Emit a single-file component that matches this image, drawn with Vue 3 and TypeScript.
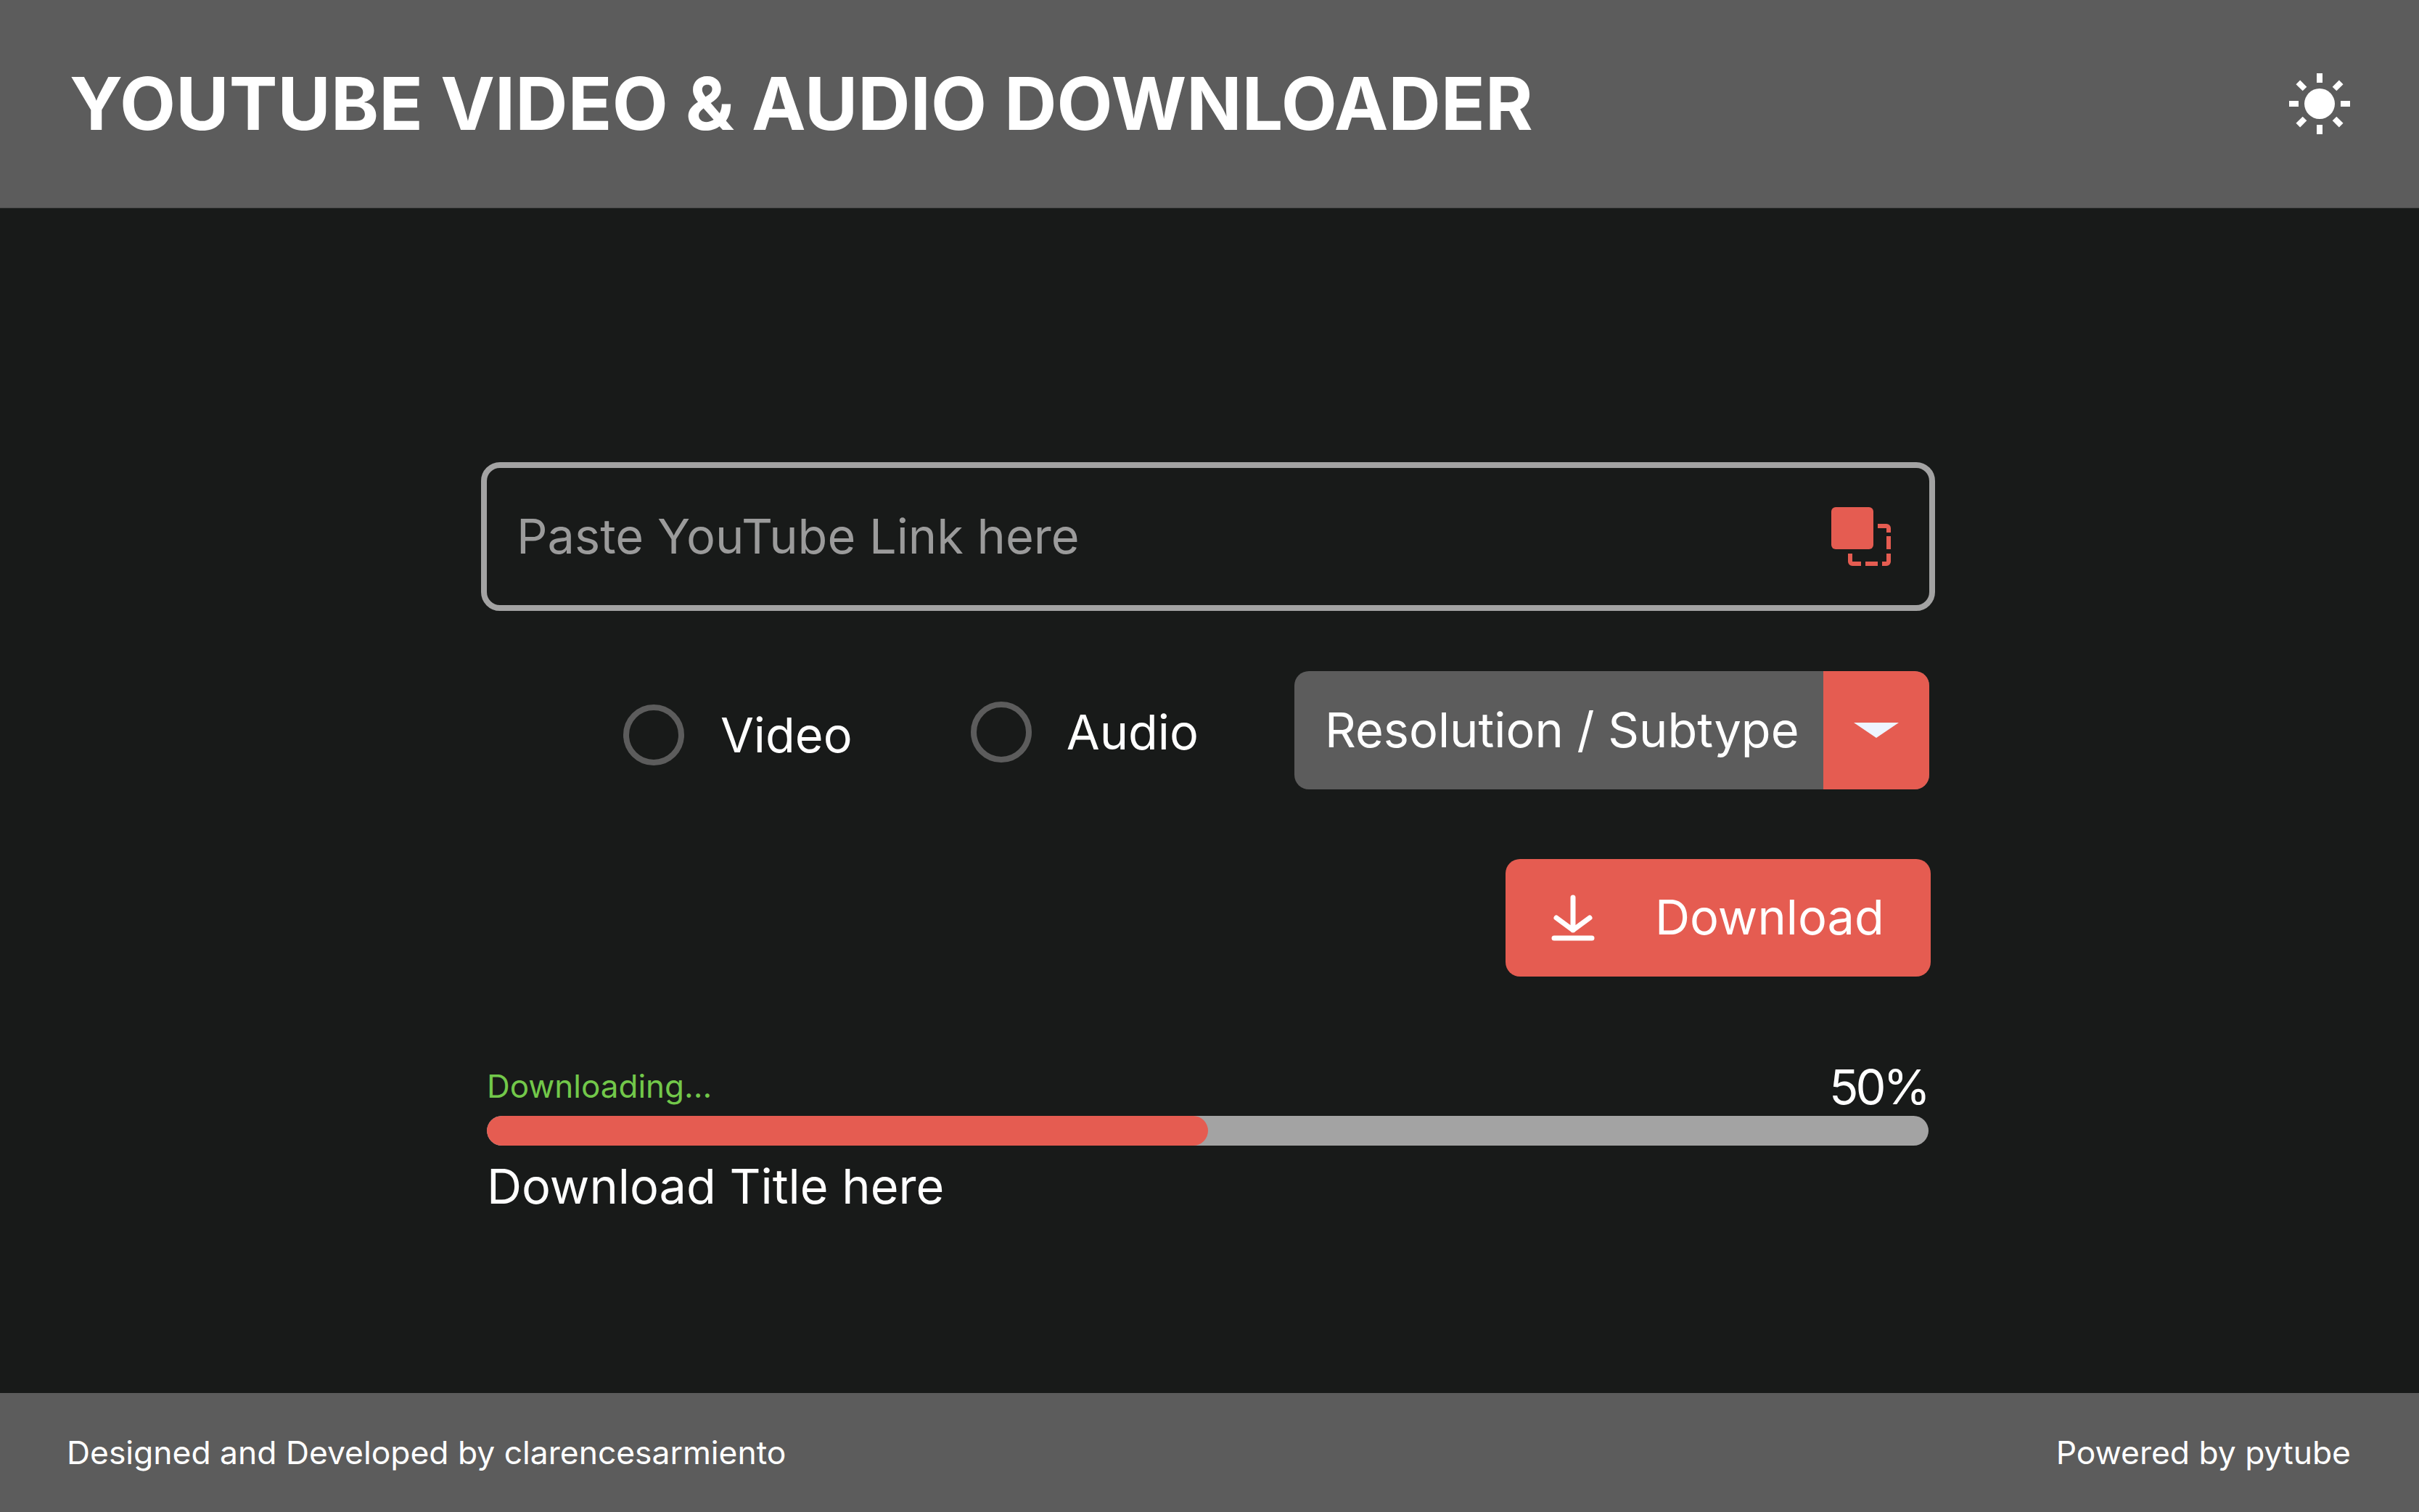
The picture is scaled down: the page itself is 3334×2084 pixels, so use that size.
<script setup lang="ts">
import { ref } from 'vue'

const progress = ref(50)
const link = ref('')
const mode = ref<'video' | 'audio' | null>(null)
const rays = [0, 45, 90, 135, 180, 225, 270, 315]
</script>

<template>
  <div class="app">
    <header class="topbar">
      <h1 class="title">YOUTUBE VIDEO &amp; AUDIO DOWNLOADER</h1>
      <button class="theme-btn" aria-label="Toggle theme">
        <svg width="84" height="84" viewBox="0 0 84 84">
          <circle cx="42" cy="42" r="21" fill="#fff" />
          <rect
            v-for="r in rays"
            :key="r"
            x="38"
            y="0"
            width="8"
            height="13"
            fill="#fff"
            :transform="`rotate(${r} 42 42)`"
          />
        </svg>
      </button>
    </header>

    <main class="content">
      <div class="link-box">
        <input v-model="link" class="link-input" placeholder="Paste YouTube Link here" />
        <svg class="paste-icon" width="82" height="81" viewBox="0 0 82 81" fill="none">
          <path
            d="M64 26H76a3 3 0 0 1 3 3V35M79 40V58M79 64V75a3 3 0 0 1-3 3H70M64 78H47M41 78H29a3 3 0 0 1-3-3V64"
            stroke="#e55c51"
            stroke-width="6"
          />
          <rect x="0" y="0" width="58" height="58" rx="6" fill="#e55c51" />
        </svg>
      </div>

      <div class="options">
        <label class="radio radio-video">
          <input v-model="mode" type="radio" value="video" />
          <span class="radio-dot"></span>
          <span>Video</span>
        </label>
        <label class="radio radio-audio">
          <input v-model="mode" type="radio" value="audio" />
          <span class="radio-dot"></span>
          <span>Audio</span>
        </label>
        <div class="select">
          <span class="select-label">Resolution / Subtype</span>
          <span class="select-arrow"><i></i></span>
        </div>
      </div>

      <div class="actions">
        <button class="download-btn">
          <svg width="60" height="64" viewBox="0 0 60 64" fill="none" stroke="#fff" stroke-width="7" stroke-linecap="round" stroke-linejoin="round">
            <path d="M30 4V49M7 32L30 49L53 32" />
            <path d="M4 60H56" />
          </svg>
          <span class="download-label">Download</span>
        </button>
      </div>

      <section class="progress">
        <div class="progress-head">
          <span class="status">Downloading...</span>
          <span class="percent">{{ progress }}%</span>
        </div>
        <div class="track">
          <div class="fill" :style="{ width: progress + '%' }"></div>
        </div>
        <div class="dl-title">Download Title here</div>
      </section>
    </main>

    <footer class="footer">
      <span>Designed and Developed by clarencesarmiento</span>
      <span>Powered by pytube</span>
    </footer>
  </div>
</template>

<style>
html,
body {
  margin: 0;
  background: #181a19;
}
</style>

<style scoped>
.app {
  min-height: 100vh;
  display: flex;
  flex-direction: column;
  background: #181a19;
  color: #fff;
  font-family: Inter, 'Noto Sans', sans-serif;
}

.topbar {
  height: 287px;
  box-sizing: border-box;
  display: flex;
  align-items: center;
  justify-content: space-between;
  padding: 0 90px 0 96px;
  background: #5c5c5c;
  border-bottom: 1px solid #4a4a4a;
}

.title {
  margin: 0;
  font-size: 100px;
  font-weight: 700;
  line-height: 1;
  letter-spacing: 0.2px;
  white-space: nowrap;
}

.theme-btn {
  display: flex;
  padding: 0;
  border: none;
  background: none;
  margin-right: 5px;
}

.content {
  flex: 1;
  box-sizing: border-box;
  padding: 350px 667px 0 663px;
}

.link-box {
  height: 205px;
  box-sizing: border-box;
  display: flex;
  align-items: center;
  border: 8px solid #a3a3a3;
  border-radius: 26px;
  padding: 0 53px 0 41px;
}

.link-input {
  flex: 1;
  min-width: 0;
  padding: 0 0 3px;
  border: none;
  outline: none;
  background: none;
  color: #fff;
  font-family: inherit;
  font-size: 66.67px;
}

.link-input::placeholder {
  color: #9b9b9b;
  opacity: 1;
}

.paste-icon {
  flex: none;
}

.options {
  height: 163px;
  display: flex;
  align-items: flex-start;
  justify-content: flex-end;
  margin-top: 83px;
  padding-right: 8px;
}

.radio {
  display: flex;
  align-items: center;
  gap: 50px;
  font-size: 66.67px;
  line-height: 84px;
}

.radio input {
  display: none;
}

.radio-dot {
  width: 84px;
  height: 84px;
  box-sizing: border-box;
  border: 8px solid #5c5c5c;
  border-radius: 50%;
}

.radio-video {
  margin: 46px 163px 0 0;
}

.radio-audio {
  gap: 48px;
  margin: 42px 132px 0 0;
}

.select {
  width: 875px;
  height: 163px;
  display: flex;
  border-radius: 20px;
  overflow: hidden;
  background: #5c5c5c;
}

.select-label {
  flex: 1;
  display: flex;
  align-items: center;
  padding: 0 0 3px 42px;
  font-size: 66.67px;
  white-space: nowrap;
}

.select-arrow {
  width: 146px;
  display: flex;
  align-items: center;
  justify-content: center;
  background: #e55c51;
}

.select-arrow i {
  width: 0;
  height: 0;
  border-left: 31px solid transparent;
  border-right: 31px solid transparent;
  border-top: 21px solid #eef4ff;
}

.actions {
  display: flex;
  justify-content: flex-end;
  margin-top: 96px;
  padding-right: 6px;
}

.download-btn {
  width: 586px;
  height: 162px;
  box-sizing: border-box;
  display: flex;
  align-items: center;
  gap: 83px;
  padding: 0 0 0 63px;
  border: none;
  border-radius: 20px;
  background: #e55c51;
  color: #fff;
  font-family: inherit;
  font-size: 66.67px;
}

.download-label {
  padding-bottom: 3px;
}

.progress {
  margin: 112px 6px 0 8px;
}

.progress-head {
  display: flex;
  justify-content: space-between;
  height: 80px;
}

.status {
  font-size: 44px;
  line-height: 54px;
  margin-top: 12px;
  color: #72c84a;
}

.percent {
  font-size: 66.67px;
  line-height: 80px;
  letter-spacing: -4px;
  margin-right: 4px;
}

.track {
  height: 41px;
  margin-right: 3px;
  border-radius: 21px;
  background: #a3a3a3;
  overflow: hidden;
}

.fill {
  height: 100%;
  border-radius: 21px;
  background: #e55c51;
}

.dl-title {
  margin-top: 16px;
  font-size: 66.67px;
  line-height: 80px;
}

.footer {
  height: 164px;
  box-sizing: border-box;
  display: flex;
  align-items: center;
  justify-content: space-between;
  padding: 0 94px 0 92px;
  background: #5c5c5c;
  font-size: 44.4px;
}
</style>
